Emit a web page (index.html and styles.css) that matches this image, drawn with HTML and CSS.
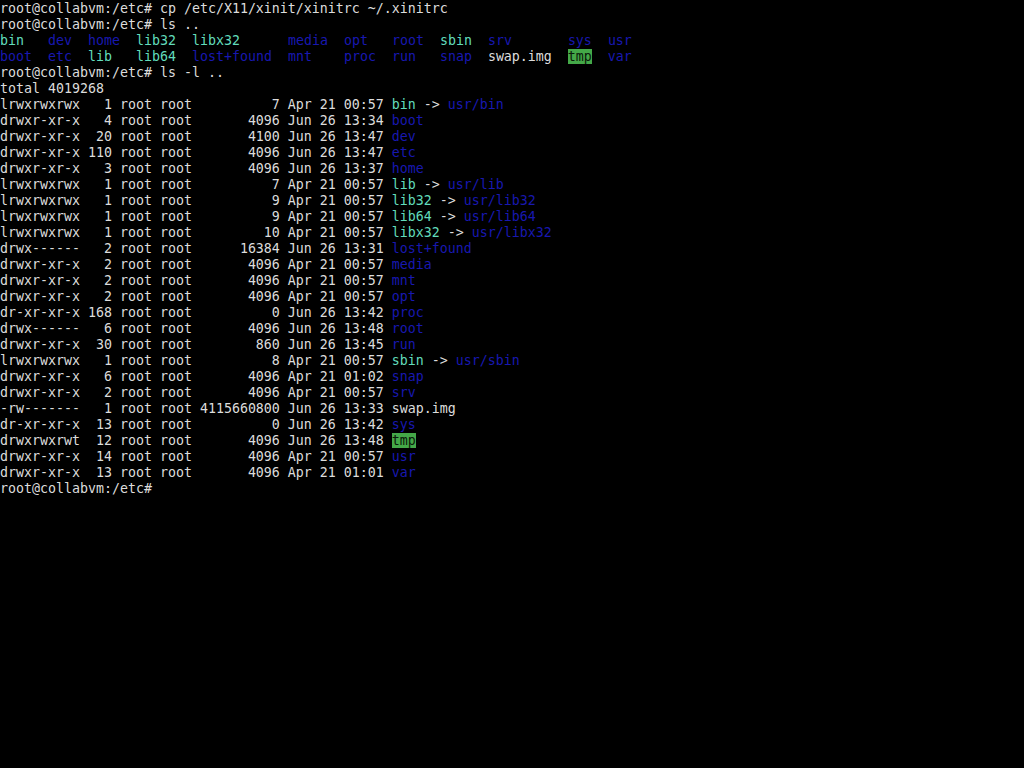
FILE: index.html
```html
<!DOCTYPE html>
<html lang="en">
<head>
  <meta charset="UTF-8" />
  <title>tty1</title>
  <link rel="stylesheet" href="styles.css">
</head>
<body>
  <div class="console">
<div class="line">root@collabvm:/etc# cp /etc/X11/xinit/xinitrc ~/.xinitrc</div>
<div class="line">root@collabvm:/etc# ls ..</div>
<div class="line"><span class="ln">bin</span>   <span class="dir">dev</span>  <span class="dir">home</span>  <span class="ln">lib32</span>  <span class="ln">libx32</span>      <span class="dir">media</span>  <span class="dir">opt</span>   <span class="dir">root</span>  <span class="ln">sbin</span>  <span class="dir">srv</span>       <span class="dir">sys</span>  <span class="dir">usr</span></div>
<div class="line"><span class="dir">boot</span>  <span class="dir">etc</span>  <span class="ln">lib</span>   <span class="ln">lib64</span>  <span class="dir">lost+found</span>  <span class="dir">mnt</span>    <span class="dir">proc</span>  <span class="dir">run</span>   <span class="dir">snap</span>  swap.img  <span class="sticky">tmp</span>  <span class="dir">var</span></div>
<div class="line">root@collabvm:/etc# ls -l ..</div>
<div class="line">total 4019268</div>
<div class="line">lrwxrwxrwx   1 root root          7 Apr 21 00:57 <span class="ln">bin</span> -&gt; <span class="dir">usr/bin</span></div>
<div class="line">drwxr-xr-x   4 root root       4096 Jun 26 13:34 <span class="dir">boot</span></div>
<div class="line">drwxr-xr-x  20 root root       4100 Jun 26 13:47 <span class="dir">dev</span></div>
<div class="line">drwxr-xr-x 110 root root       4096 Jun 26 13:47 <span class="dir">etc</span></div>
<div class="line">drwxr-xr-x   3 root root       4096 Jun 26 13:37 <span class="dir">home</span></div>
<div class="line">lrwxrwxrwx   1 root root          7 Apr 21 00:57 <span class="ln">lib</span> -&gt; <span class="dir">usr/lib</span></div>
<div class="line">lrwxrwxrwx   1 root root          9 Apr 21 00:57 <span class="ln">lib32</span> -&gt; <span class="dir">usr/lib32</span></div>
<div class="line">lrwxrwxrwx   1 root root          9 Apr 21 00:57 <span class="ln">lib64</span> -&gt; <span class="dir">usr/lib64</span></div>
<div class="line">lrwxrwxrwx   1 root root         10 Apr 21 00:57 <span class="ln">libx32</span> -&gt; <span class="dir">usr/libx32</span></div>
<div class="line">drwx------   2 root root      16384 Jun 26 13:31 <span class="dir">lost+found</span></div>
<div class="line">drwxr-xr-x   2 root root       4096 Apr 21 00:57 <span class="dir">media</span></div>
<div class="line">drwxr-xr-x   2 root root       4096 Apr 21 00:57 <span class="dir">mnt</span></div>
<div class="line">drwxr-xr-x   2 root root       4096 Apr 21 00:57 <span class="dir">opt</span></div>
<div class="line">dr-xr-xr-x 168 root root          0 Jun 26 13:42 <span class="dir">proc</span></div>
<div class="line">drwx------   6 root root       4096 Jun 26 13:48 <span class="dir">root</span></div>
<div class="line">drwxr-xr-x  30 root root        860 Jun 26 13:45 <span class="dir">run</span></div>
<div class="line">lrwxrwxrwx   1 root root          8 Apr 21 00:57 <span class="ln">sbin</span> -&gt; <span class="dir">usr/sbin</span></div>
<div class="line">drwxr-xr-x   6 root root       4096 Apr 21 01:02 <span class="dir">snap</span></div>
<div class="line">drwxr-xr-x   2 root root       4096 Apr 21 00:57 <span class="dir">srv</span></div>
<div class="line">-rw-------   1 root root 4115660800 Jun 26 13:33 swap.img</div>
<div class="line">dr-xr-xr-x  13 root root          0 Jun 26 13:42 <span class="dir">sys</span></div>
<div class="line">drwxrwxrwt  12 root root       4096 Jun 26 13:48 <span class="sticky">tmp</span></div>
<div class="line">drwxr-xr-x  14 root root       4096 Apr 21 00:57 <span class="dir">usr</span></div>
<div class="line">drwxr-xr-x  13 root root       4096 Apr 21 01:01 <span class="dir">var</span></div>
<div class="line">root@collabvm:/etc#</div>
  </div>
</body>
</html>
```

FILE: styles.css
```css
html, body {
  background: #000;
  margin: 0;
  padding: 0;
  height: 100%;
}

.console {
  font-family: "DejaVu Sans Mono", "Liberation Mono", monospace;
  font-size: 13.29px;
  line-height: 16px;
  color: #dcdcdc;
  padding-top: 1px;
}

.line {
  white-space: pre;
  height: 16px;
}

.dir {
  color: #1818b0;
}

.ln {
  color: #62dcbc;
}

.sticky {
  background: #44a848;
  color: #0a1a0a;
}
```
